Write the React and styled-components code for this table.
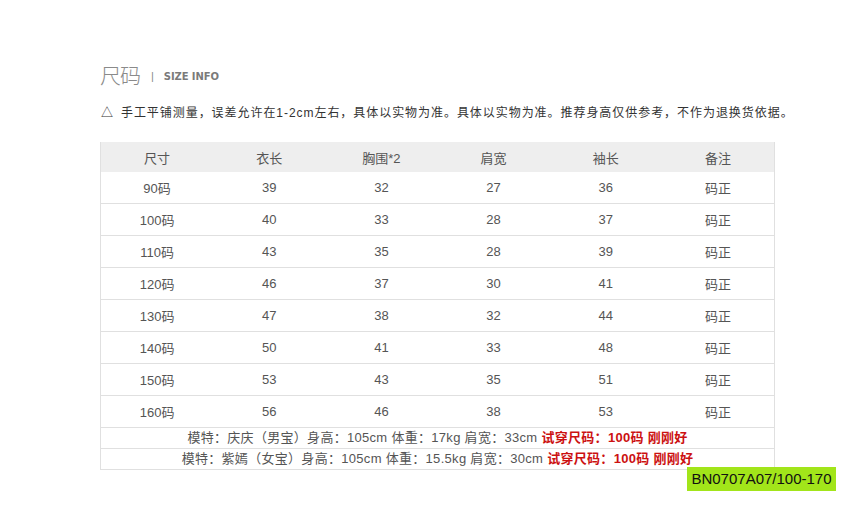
import React from 'react';
import styled, { createGlobalStyle } from 'styled-components';

const GlobalStyle = createGlobalStyle`
  body {
    margin: 0;
    background: #fff;
    font-family: "Liberation Sans", "Noto Sans CJK SC", sans-serif;
  }
`;

const Page = styled.div`
  width: 852px;
  height: 507px;
  padding: 59px 0 0 100px;
  box-sizing: border-box;
  position: relative;
`;

const Title = styled.div`
  display: flex;
  align-items: center;
  height: 30px;
  .cn {
    font-family: "Noto Sans CJK SC", sans-serif;
    font-weight: 300;
    font-size: 21px;
    color: #8a8a8a;
    letter-spacing: -1px;
  }
  .bar {
    font-size: 11px;
    color: #888;
    margin: 4px 10px 0 11px;
  }
  .en {
    font-family: "DejaVu Sans", sans-serif;
    font-size: 10px;
    font-weight: bold;
    color: #7a7a7a;
    margin-top: 4px;
    letter-spacing: -0.1px;
  }
`;

const Notice = styled.p`
  margin: 15px 0 0 1px;
  font-family: "Liberation Sans", "Noto Sans CJK SC", sans-serif;
  font-size: 12px;
  color: #333;
  line-height: 18px;
  letter-spacing: 0.95px;
  span { margin-right: 7px; }
`;

const Table = styled.div`
  width: 673px;
  margin-top: 20px;
  border-left: 1px solid #e0e0e0;
  border-right: 1px solid #e0e0e0;
  font-family: "Liberation Sans", "Noto Sans CJK SC", sans-serif;
`;

const Row = styled.div`
  display: grid;
  grid-template-columns: repeat(6, 1fr);
  height: ${p => (p.$head ? 30 : 32)}px;
  align-items: center;
  text-align: center;
  font-size: 13px;
  color: #555;
  background: ${p => (p.$head ? '#eeeeee' : '#fff')};
  border-bottom: ${p => (p.$head ? 'none' : '1px solid #e0e0e0')};
  box-sizing: border-box;
`;

const ModelRow = styled.div`
  height: 21px;
  line-height: 20px;
  text-align: center;
  font-size: 13px;
  letter-spacing: 0.3px;
  color: #555;
  border-bottom: 1px solid #e0e0e0;
  box-sizing: border-box;
  b {
    color: #cc1111;
    font-weight: bold;
  }
`;

const Tag = styled.div`
  position: absolute;
  left: 687px;
  top: 467px;
  width: 149px;
  height: 24px;
  background: #a2e51a;
  color: #111;
  font-family: "Liberation Sans", sans-serif;
  font-size: 15px;
  line-height: 24px;
  text-align: center;
`;

const head = ['尺寸', '衣长', '胸围*2', '肩宽', '袖长', '备注'];
const rows = [
  ['90码', 39, 32, 27, 36],
  ['100码', 40, 33, 28, 37],
  ['110码', 43, 35, 28, 39],
  ['120码', 46, 37, 30, 41],
  ['130码', 47, 38, 32, 44],
  ['140码', 50, 41, 33, 48],
  ['150码', 53, 43, 35, 51],
  ['160码', 56, 46, 38, 53],
];

export default function App() {
  return (
    <Page>
      <GlobalStyle />
      <Title>
        <span className="cn">尺码</span>
        <span className="bar">|</span>
        <span className="en">SIZE INFO</span>
      </Title>
      <Notice>
        <span>△</span>手工平铺测量，误差允许在1-2cm左右，具体以实物为准。具体以实物为准。推荐身高仅供参考，不作为退换货依据。
      </Notice>
      <Table>
        <Row $head>
          {head.map(h => <div key={h}>{h}</div>)}
        </Row>
        {rows.map(r => (
          <Row key={r[0]}>
            {r.map((c, i) => <div key={i}>{c}</div>)}
            <div>码正</div>
          </Row>
        ))}
        <ModelRow>
          模特：庆庆（男宝）身高：105cm 体重：17kg 肩宽：33cm <b>试穿尺码：100码 刚刚好</b>
        </ModelRow>
        <ModelRow>
          模特：紫嫣（女宝）身高：105cm 体重：15.5kg 肩宽：30cm <b>试穿尺码：100码 刚刚好</b>
        </ModelRow>
      </Table>
      <Tag>BN0707A07/100-170</Tag>
    </Page>
  );
}
